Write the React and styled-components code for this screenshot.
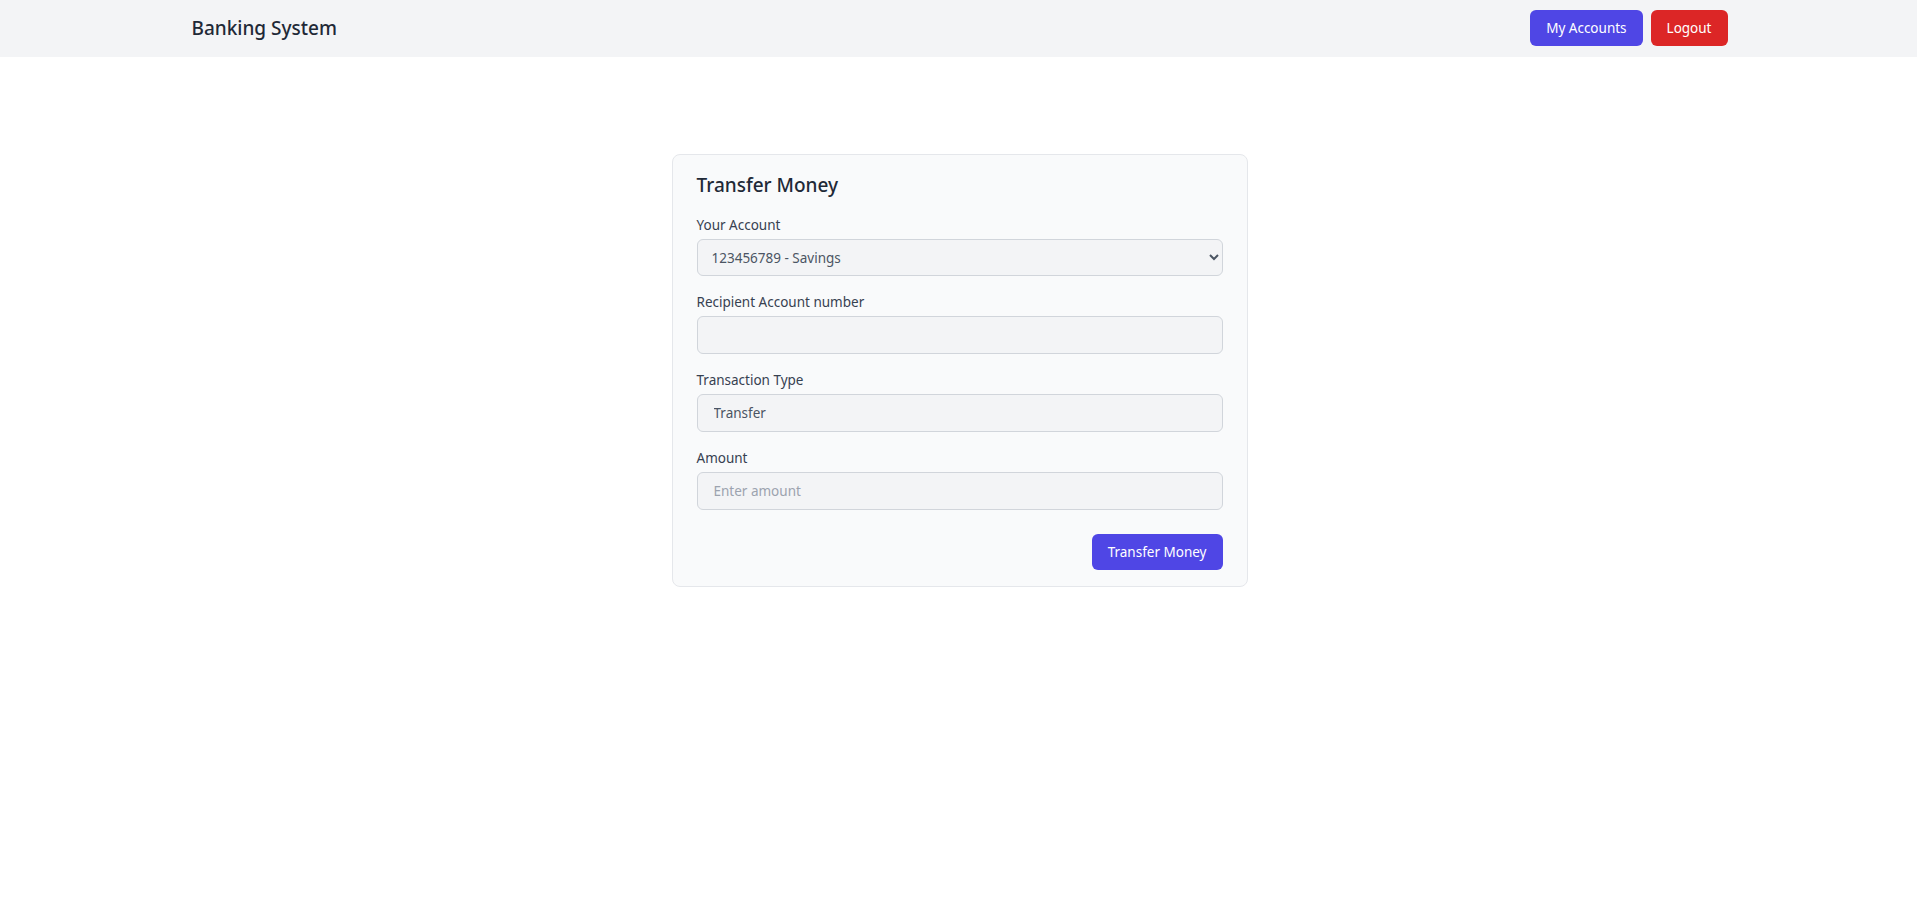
import React from "react";
import styled, { createGlobalStyle } from "styled-components";

const GlobalStyle = createGlobalStyle`
  * {
    box-sizing: border-box;
  }

  body {
    margin: 0;
    background: #ffffff;
    font-family: "Noto Sans", "Open Sans", sans-serif;
    color: #1f2937;
  }
`;

const Navbar = styled.nav`
  background-color: #f3f4f6;
  padding: 10px 0 11px;
`;

const NavInner = styled.div`
  width: 1538px;
  margin: 0 auto;
  padding-left: 2px;
  display: flex;
  justify-content: space-between;
  align-items: center;
`;

const Brand = styled.span`
  font-size: 19px;
  font-weight: 500;
  color: #1f2937;
`;

const NavActions = styled.div`
  display: flex;
  gap: 8px;
`;

const Button = styled.button`
  height: 36px;
  padding: 0 16px;
  border: none;
  border-radius: 6px;
  font-family: inherit;
  font-size: 13.5px;
  color: #ffffff;
  cursor: pointer;
  background-color: ${(p) => (p.$variant === "danger" ? "#dc2626" : "#4f46e5")};
`;

const Card = styled.div`
  width: 576px;
  margin: 97px auto 0;
  transform: translateX(1px);
  background: #f9fafb;
  border: 1px solid #e5e7eb;
  border-radius: 8px;
  padding: 16px 24px;
`;

const Title = styled.h2`
  margin: 0 0 16px;
  font-size: 19px;
  line-height: 28px;
  font-weight: 500;
  color: #1f2937;
`;

const Field = styled.div`
  margin-bottom: 16px;
`;

const Label = styled.label`
  display: block;
  margin-bottom: 4px;
  font-size: 13.5px;
  line-height: 20px;
  color: #374151;
`;

const Select = styled.select`
  width: 100%;
  height: 37px;
  padding: 0 10px;
  background: #f3f4f6;
  border: 1px solid #d1d5db;
  border-radius: 6px;
  font-family: inherit;
  font-size: 13.5px;
  color: #4b5563;
`;

const Input = styled.input`
  width: 100%;
  height: 38px;
  padding: 0 16px;
  background: #f3f4f6;
  border: 1px solid #d1d5db;
  border-radius: 6px;
  font-family: inherit;
  font-size: 13.5px;
  color: #4b5563;

  &::placeholder {
    color: #9ca3af;
  }
`;

const Actions = styled.div`
  display: flex;
  justify-content: flex-end;
  padding-top: 8px;
`;

export default function App() {
  return (
    <>
      <GlobalStyle />
      <Navbar>
        <NavInner>
          <Brand>Banking System</Brand>
          <NavActions>
            <Button>My Accounts</Button>
            <Button $variant="danger">Logout</Button>
          </NavActions>
        </NavInner>
      </Navbar>

      <Card>
        <Title>Transfer Money</Title>
        <Field>
          <Label>Your Account</Label>
          <Select defaultValue="123456789">
            <option value="123456789">123456789 - Savings</option>
          </Select>
        </Field>
        <Field>
          <Label>Recipient Account number</Label>
          <Input type="text" />
        </Field>
        <Field>
          <Label>Transaction Type</Label>
          <Input type="text" value="Transfer" readOnly />
        </Field>
        <Field>
          <Label>Amount</Label>
          <Input type="number" placeholder="Enter amount" />
        </Field>
        <Actions>
          <Button>Transfer Money</Button>
        </Actions>
      </Card>
    </>
  );
}
